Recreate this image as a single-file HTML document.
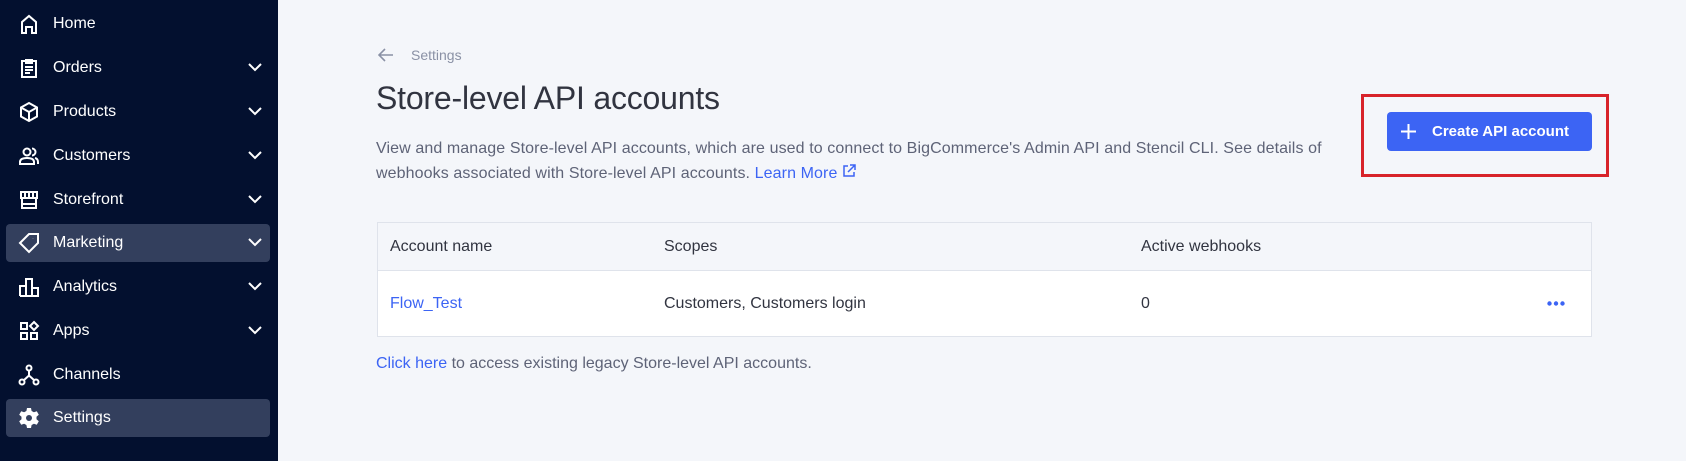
<!DOCTYPE html><html><head><style>
*{margin:0;padding:0;box-sizing:border-box}
body{width:1686px;height:461px;overflow:hidden;background:#f4f6fa;font-family:"Liberation Sans",sans-serif;position:relative}
.sb{position:absolute;left:0;top:0;width:278px;height:461px;background:#03102f}
.it{position:absolute;left:6px;width:264px;height:38px;color:#fff;font-size:16px}
.it.a{background:#333f5d;border-radius:4px}
.it span{position:absolute;left:47px;top:10px}
.it svg.ic{position:absolute;left:12px;top:8px}
.it svg.ch{position:absolute;left:242px;top:14px}
.t{position:absolute;color:#313440}
a{color:#3c64f4;text-decoration:none}
</style></head><body>
<div class="sb">
<div class="it" style="top:5px"><svg class="ic" width="22" height="22" viewBox="0 0 22 22" fill="none" stroke="#fff" stroke-width="2"><path d="M4 20V9l7-6 7 6v11h-4v-6H8v6z"/></svg><span>Home</span></div>
<div class="it" style="top:49px"><svg class="ic" width="22" height="22" viewBox="0 0 22 22" fill="none" stroke="#fff" stroke-width="2"><rect x="4" y="4" width="14" height="16"/><path d="M8 3h6v3H8zM7 10h8M7 13h8M7 16h5"/></svg><span>Orders</span><svg class="ch" width="14" height="9" viewBox="0 0 14 9" fill="none" stroke="#fff" stroke-width="2"><path d="M1 1l6 6 6-6"/></svg></div>
<div class="it" style="top:93px"><svg class="ic" width="22" height="22" viewBox="0 0 22 22" fill="none" stroke="#fff" stroke-width="2"><path d="M11 2l8 4.5v9L11 20l-8-4.5v-9zM3 6.5l8 4.5 8-4.5M11 11v9"/></svg><span>Products</span><svg class="ch" width="14" height="9" viewBox="0 0 14 9" fill="none" stroke="#fff" stroke-width="2"><path d="M1 1l6 6 6-6"/></svg></div>
<div class="it" style="top:137px"><svg class="ic" width="22" height="22" viewBox="0 0 22 22" fill="none" stroke="#fff" stroke-width="2"><circle cx="9" cy="7" r="3.5"/><path d="M2 19v-2c0-3 3-4 7-4s7 1 7 4v2zM14 3.5a3.5 3.5 0 010 7M17 13c2 .5 3 2 3 4v2"/></svg><span>Customers</span><svg class="ch" width="14" height="9" viewBox="0 0 14 9" fill="none" stroke="#fff" stroke-width="2"><path d="M1 1l6 6 6-6"/></svg></div>
<div class="it" style="top:181px"><svg class="ic" width="22" height="22" viewBox="0 0 22 22" fill="none" stroke="#fff" stroke-width="2"><path d="M3 3h16v6H3zM7 3v6M11 3v6M15 3v6M4 9v10h14V9M4 15h14"/></svg><span>Storefront</span><svg class="ch" width="14" height="9" viewBox="0 0 14 9" fill="none" stroke="#fff" stroke-width="2"><path d="M1 1l6 6 6-6"/></svg></div>
<div class="it a" style="top:224px"><svg class="ic" width="22" height="22" viewBox="0 0 22 22" fill="none" stroke="#fff" stroke-width="2"><path d="M2 11l9-9h9v9l-9 9zM15 6.5v.1"/></svg><span>Marketing</span><svg class="ch" width="14" height="9" viewBox="0 0 14 9" fill="none" stroke="#fff" stroke-width="2"><path d="M1 1l6 6 6-6"/></svg></div>
<div class="it" style="top:268px"><svg class="ic" width="22" height="22" viewBox="0 0 22 22" fill="none" stroke="#fff" stroke-width="2"><path d="M2 20V10h6v10M8 20V3h6v17M14 20v-8h6v8zM2 20h18"/></svg><span>Analytics</span><svg class="ch" width="14" height="9" viewBox="0 0 14 9" fill="none" stroke="#fff" stroke-width="2"><path d="M1 1l6 6 6-6"/></svg></div>
<div class="it" style="top:312px"><svg class="ic" width="22" height="22" viewBox="0 0 22 22" fill="none" stroke="#fff" stroke-width="2"><rect x="3" y="3" width="6" height="6"/><rect x="3" y="13" width="6" height="6"/><rect x="13" y="13" width="6" height="6"/><path d="M16 2l4 4-4 4-4-4z"/></svg><span>Apps</span><svg class="ch" width="14" height="9" viewBox="0 0 14 9" fill="none" stroke="#fff" stroke-width="2"><path d="M1 1l6 6 6-6"/></svg></div>
<div class="it" style="top:356px"><svg class="ic" width="22" height="22" viewBox="0 0 22 22" fill="none" stroke="#fff" stroke-width="2"><circle cx="11" cy="4" r="2.5"/><circle cx="4" cy="18" r="2.5"/><circle cx="18" cy="18" r="2.5"/><path d="M11 6.5v5l-5.5 5M11 11.5l5.5 5"/></svg><span>Channels</span></div>
<div class="it a" style="top:399px"><svg class="ic" width="22" height="22" viewBox="0 0 22 22"><path fill="#fff" d="M9 1h4l.6 3 2.3 1.3 2.9-1 2 3.4-2.3 2v2.6l2.3 2-2 3.4-2.9-1-2.3 1.3-.6 3H9l-.6-3-2.3-1.3-2.9 1-2-3.4 2.3-2V9.7L1.2 7.7l2-3.4 2.9 1L8.4 4z"/><circle cx="11" cy="11" r="3" fill="#333f5d"/></svg><span>Settings</span></div>
</div>
<svg style="position:absolute;left:378px;top:48px" width="16" height="14" viewBox="0 0 16 14" fill="none" stroke="#8a91a5" stroke-width="1.6"><path d="M15 7H2M7 1L1 7l6 6"/></svg>
<div class="t" style="left:411px;top:47px;font-size:14px;color:#8a91a5">Settings</div>
<div class="t" style="left:376px;top:80px;font-size:32px;color:#313440;letter-spacing:-0.2px">Store-level API accounts</div>
<div class="t" style="left:376px;top:136px;font-size:16px;line-height:25px;color:#5e6377;width:980px;letter-spacing:0.1px">View and manage Store-level API accounts, which are used to connect to BigCommerce's Admin API and Stencil CLI. See details of webhooks associated with Store-level API accounts. <a href="#">Learn More</a> <svg width="14" height="14" viewBox="0 0 14 14" fill="none" stroke="#3c64f4" stroke-width="1.5"><path d="M6 2H2v10h10V8M8 1h5v5M13 1L6 8"/></svg></div>
<div style="position:absolute;left:1361px;top:94px;width:248px;height:83px;border:3px solid #d8232a"></div>
<div style="position:absolute;left:1387px;top:112px;width:205px;height:39px;background:#3c64f4;border-radius:4px;color:#fff;font-size:15px;font-weight:bold;line-height:39px;padding-left:45px">Create API account</div>
<svg style="position:absolute;left:1400px;top:123px" width="17" height="17" viewBox="0 0 17 17" stroke="#fff" stroke-width="2"><path d="M8.5 1v15M1 8.5h15"/></svg>
<div style="position:absolute;left:377px;top:222px;width:1215px;height:115px;background:#fff;border:1px solid #dfe3eb">
<div style="height:48px;background:#f4f6fa;border-bottom:1px solid #dfe3eb"></div></div>
<div class="t" style="left:390px;top:238px;font-size:16px;color:#313440">Account name</div>
<div class="t" style="left:664px;top:238px;font-size:16px">Scopes</div>
<div class="t" style="left:1141px;top:238px;font-size:16px">Active webhooks</div>
<div class="t" style="left:390px;top:295px;font-size:16px"><a href="#">Flow_Test</a></div>
<div class="t" style="left:664px;top:295px;font-size:16px">Customers, Customers login</div>
<div class="t" style="left:1141px;top:295px;font-size:16px">0</div>
<svg style="position:absolute;left:1547px;top:301px" width="18" height="5" viewBox="0 0 18 5" fill="#3c64f4"><circle cx="2.5" cy="2.5" r="2.2"/><circle cx="9" cy="2.5" r="2.2"/><circle cx="15.5" cy="2.5" r="2.2"/></svg>
<div class="t" style="left:376px;top:355px;font-size:16px;color:#5e6377"><a href="#">Click here</a> to access existing legacy Store-level API accounts.</div>
</body></html>
